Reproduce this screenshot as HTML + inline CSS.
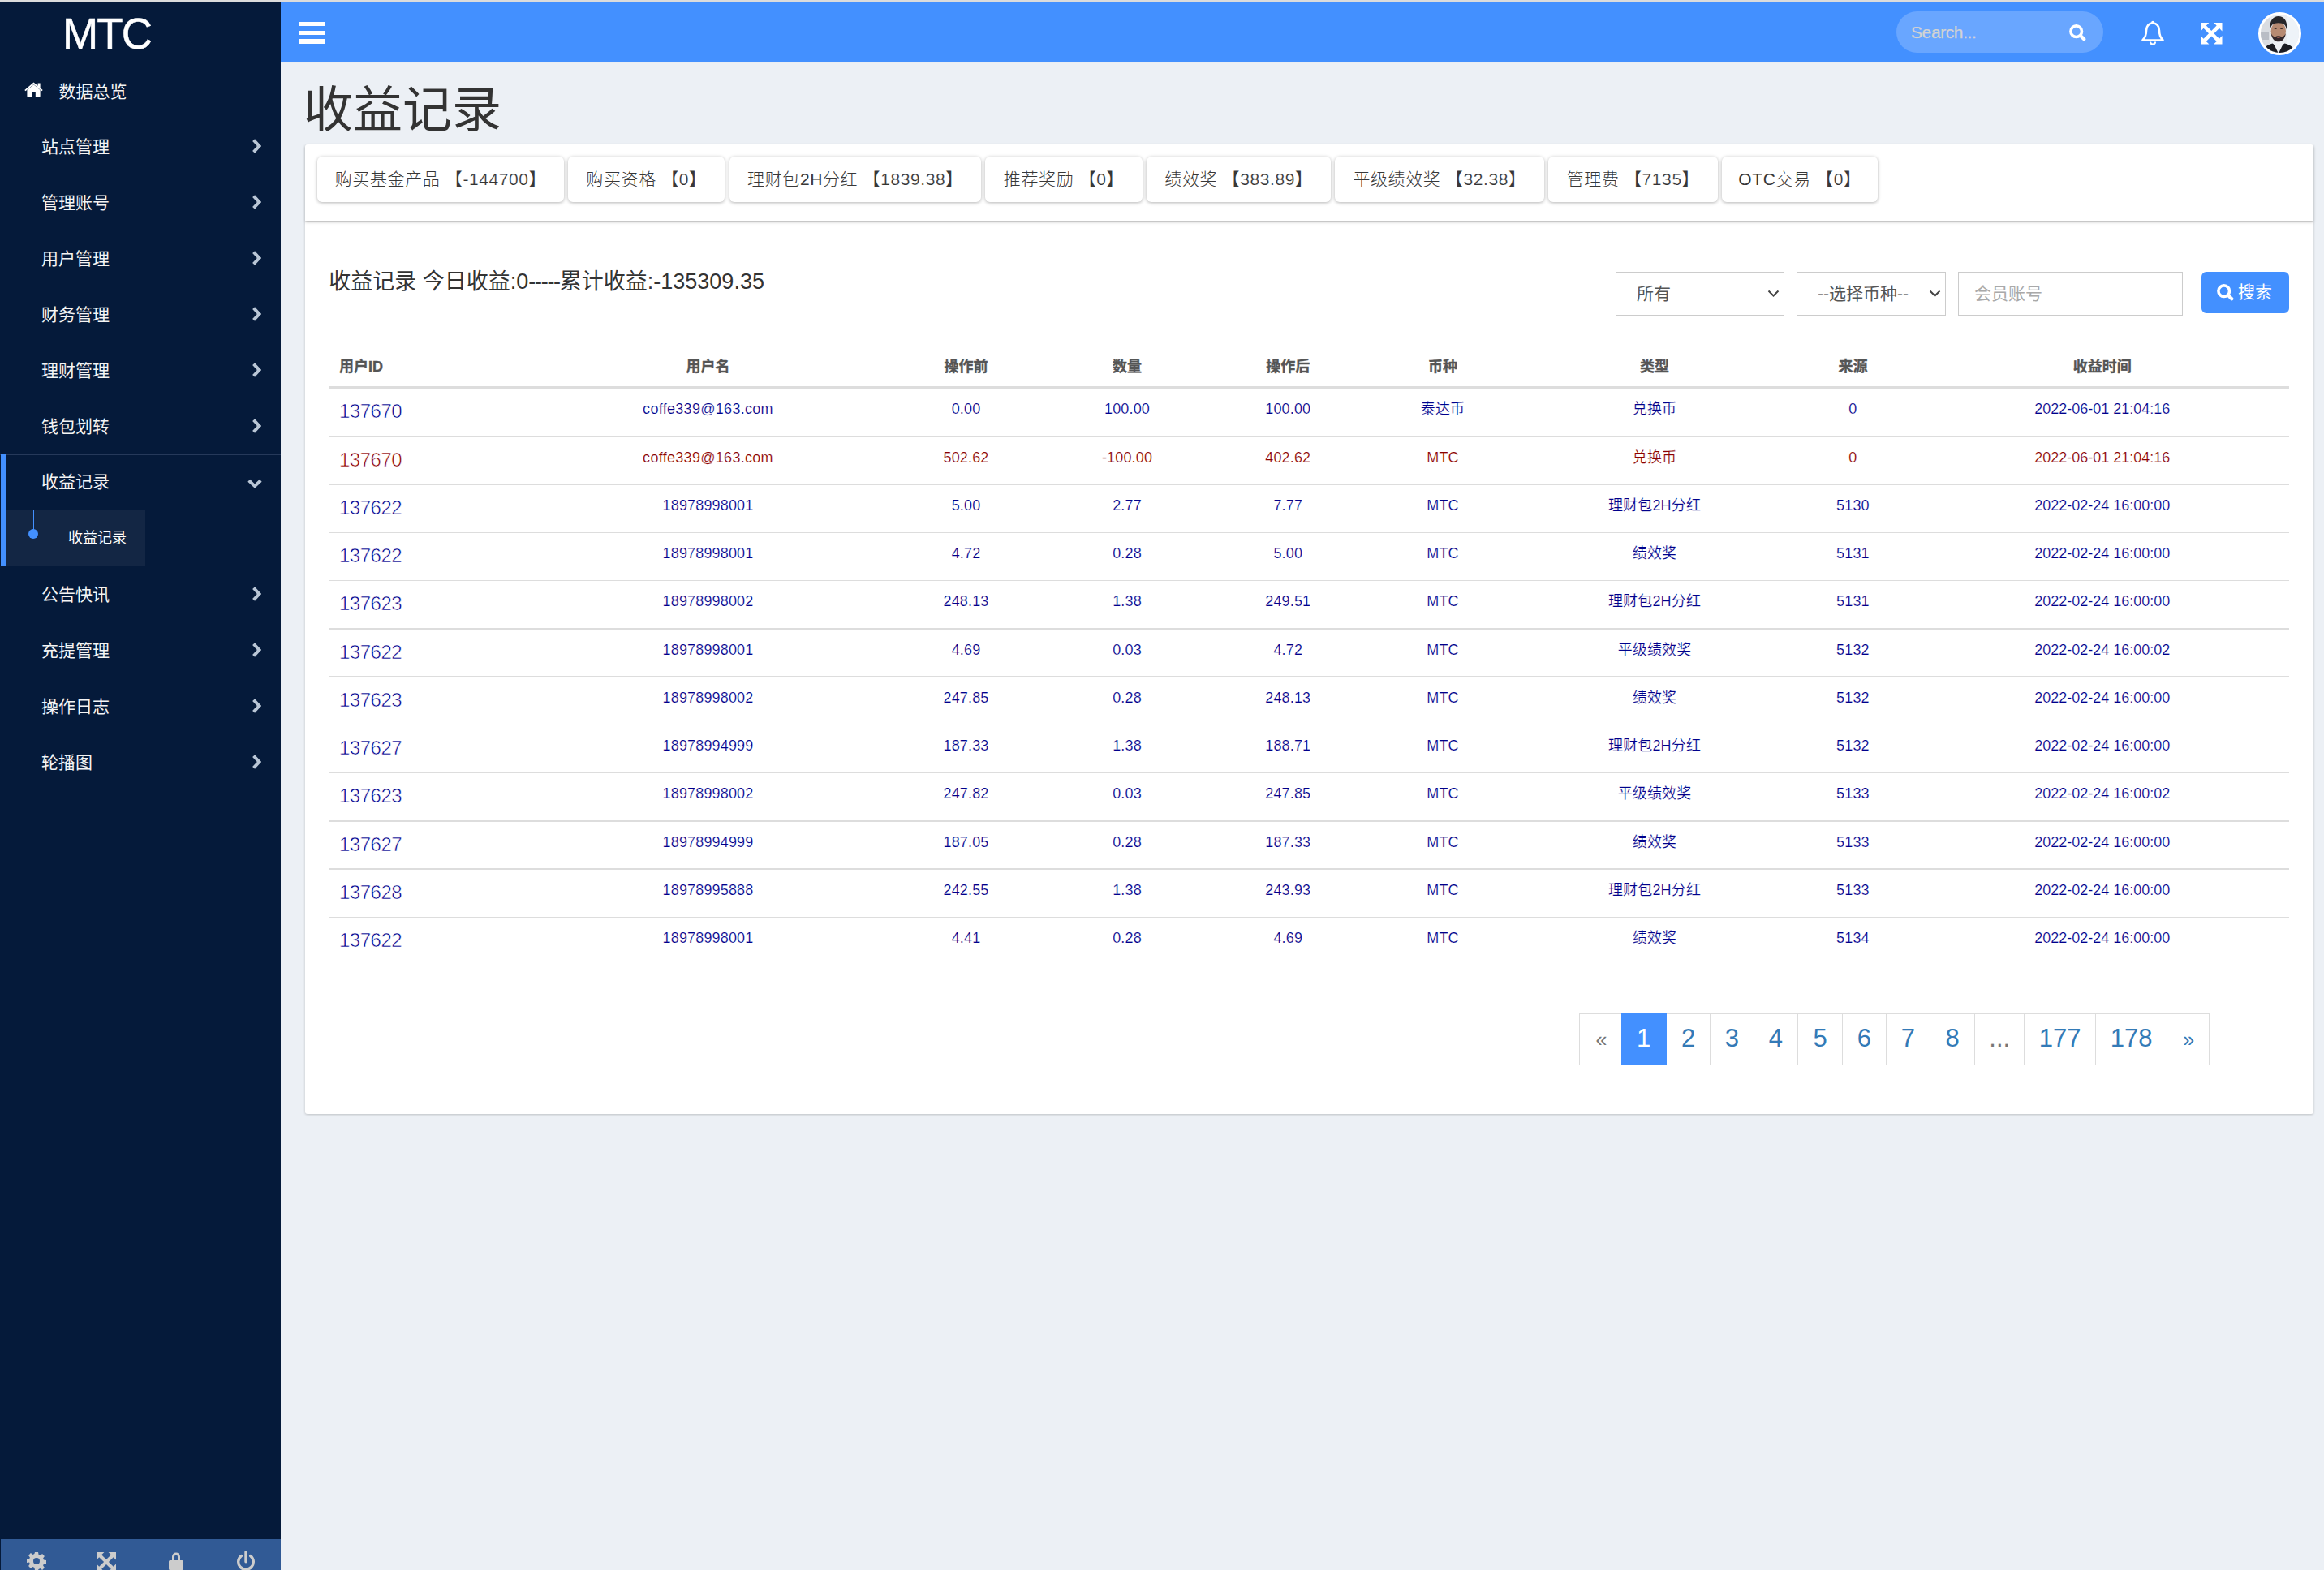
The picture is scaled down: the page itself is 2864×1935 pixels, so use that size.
<!DOCTYPE html>
<html lang="zh-CN">
<head>
<meta charset="utf-8">
<title>收益记录</title>
<style>
*{box-sizing:border-box;margin:0;padding:0}
html,body{width:2864px;height:1935px;overflow:hidden}
body{position:relative;background:#ecf0f5;font-family:"Liberation Sans","Noto Sans CJK SC",sans-serif;font-size:21px;color:#333}
a{text-decoration:none;color:inherit}
ul{list-style:none}
.topstrip{position:absolute;left:0;top:0;width:2864px;height:2px;background:#dcdcdc}
.sidebar{position:absolute;left:0;top:2px;width:346px;height:1933px;background:#051a3a;color:#fff}
.logo{position:absolute;left:1px;top:0;width:345px;height:75px;border-bottom:1px solid #5f5f5f}
.logo span{position:absolute;left:76px;top:10px;-webkit-text-stroke:0.5px #fff;font-size:53px;line-height:60px;letter-spacing:-1.9px;color:#fff}
.nav li{position:absolute;left:0;width:346px;height:69px}
.nav li a{position:absolute;left:51px;top:0;line-height:69px;font-size:21px;color:#f4f4f4;white-space:nowrap}
.nav li .chev{position:absolute;left:310px;top:25px}
.nav li .chevd{position:absolute;left:305px;top:28.5px}
.nav li.home a{left:72.5px}
.nav li.home svg{position:absolute;left:30px;top:23px}
.nav li.active{border-top:1px solid #26395a;background:#051a3a}
.nav li.active a{top:-2px}
.activebar{position:absolute;left:1px;top:558px;width:7px;height:138px;background:#4390ff}
.sub{position:absolute;left:8px;top:627px;width:171px;height:69px;background:#132644}
.sub a{position:absolute;left:76px;top:0;line-height:68px;font-size:18px;color:#fff;white-space:nowrap}
.sub .vline{position:absolute;left:32.5px;top:0;width:1.5px;height:26px;background:#4390ff}
.sub .dot{position:absolute;left:27px;top:23px;width:12px;height:12px;border-radius:50%;background:#4390ff}
.sfoot{position:absolute;left:1px;top:1895px;width:345px;height:60px;background:#315a95}
.sfoot svg{position:absolute;top:16px}
.header{position:absolute;left:346px;top:2px;width:2518px;height:74px;background:#4390ff;box-shadow:0 1px 1px rgba(0,0,0,.06)}
.burger{position:absolute;left:22px;top:24.5px;width:33px;height:28px}
.burger i{position:absolute;left:0;width:33px;height:5.8px;background:#fff;border-radius:1px}
.hsearch{position:absolute;left:1991px;top:12px;width:255px;height:51px;border-radius:26px;background:#69a6ff}
.hsearch span{position:absolute;left:18px;top:0;-webkit-text-stroke:0.25px #d3d3d3;line-height:51px;font-size:21px;color:#d3d3d3;letter-spacing:-0.4px}
.hsearch svg{position:absolute;left:213px;top:15.5px}
.hicon{position:absolute}
.avatar{position:absolute;left:2437px;top:13px;width:53px;height:53px;border-radius:50%;border:3px solid #fff;overflow:hidden;background:#e9e9ea}
h1{position:absolute;left:374px;top:93px;font-size:61px;line-height:86px;font-weight:400;color:#333;white-space:nowrap}
.card1{position:absolute;left:376px;top:178px;width:2475px;height:94px;background:#fff;border-radius:3px 3px 0 0;box-shadow:0 1px 3px rgba(0,0,0,.22),0 2px 4px rgba(0,0,0,.12);z-index:2}
.tab{position:absolute;top:15px;height:56px;line-height:56px;text-align:center;background:#fff;border-radius:6px;box-shadow:0 1px 4px rgba(0,0,0,.3);font-size:21px;letter-spacing:0.6px;font-weight:300;color:#383838;white-space:nowrap}
.tab span{-webkit-text-stroke:0.2px #fff;color:#333}
.card2{position:absolute;left:376px;top:272px;width:2475px;height:1100.5px;background:#fff;border-radius:0 0 3px 3px;box-shadow:0 1px 3px rgba(0,0,0,.2);z-index:1}
.ctitle{position:absolute;left:29.3px;top:55px;font-size:27px;line-height:40px;color:#333;white-space:nowrap}
.hy{letter-spacing:-1.3px}
.sel{position:absolute;top:63px;height:54px;border:1.5px solid #ccc;background:#fff;font-size:21px;color:#555;line-height:51px;white-space:nowrap}
.sel svg{position:absolute;top:21px}
.inp{position:absolute;left:2037px;top:63px;width:277px;height:54px;border:1.5px solid #ccc;background:#fff;font-size:21px;color:#a9a9a9;line-height:51px;padding-left:19px;box-shadow:inset 0 1px 1px rgba(0,0,0,.075)}
.btn{position:absolute;left:2337px;top:63px;width:108px;height:51px;border-radius:6px;background:#4390ff;color:#fff;font-size:21px;line-height:49px}
.btn svg{position:absolute;left:19px;top:15px}
.btn span{position:absolute;left:45px;top:0}
.tbl{position:absolute;left:30px;top:147px;width:2415px;height:780px}
.thead{position:absolute;left:0;top:0;width:2415px;height:60px;border-bottom:3px solid #ddd}
.thead b{position:absolute;top:20px;width:400px;text-align:center;font-size:18px;line-height:26px;font-weight:700;color:#555;white-space:nowrap;-webkit-text-stroke:0.35px #555}
.tr{position:absolute;left:0;width:2415px;height:59px;color:#00008b}
.tr.red{color:#8b0000}
.tr span{position:absolute;top:12px;width:400px;text-align:center;font-size:18px;line-height:26px;white-space:nowrap;letter-spacing:0.15px;-webkit-text-stroke:0.2px #fff}
.tbl .c0{text-align:left}
.tr span.em{letter-spacing:0.3px}
.tr span.dt{letter-spacing:0}
.tr span.c0{font-size:24px;line-height:34px;top:11px;letter-spacing:-0.5px;-webkit-text-stroke:0.55px #fff}
.ln{position:absolute;left:0;width:2415px;height:1.5px;background:#ddd}
.pg{position:absolute;top:976.5px;height:64px;border:1.5px solid #ddd;margin-left:-1.5px;background:#fff;font-size:31px;line-height:59px;text-align:center;color:#337ab7}
.pg.g{font-size:25px;line-height:62.500px;letter-spacing:-1.5px}
.pg.dis{color:#777}
.pg.act{background:#4390ff;border-color:#4390ff;color:#fff;z-index:2}
</style>
</head>
<body>
<div class="topstrip"></div>
<aside class="sidebar">
<div class="logo"><span>MTC</span></div>
<ul class="nav">
<li class="home" style="top:76px"><svg width="23" height="20" viewBox="0 0 23 20"><path d="M11.5 3.2 L3.4 9.9 V17.6 a.8 .8 0 0 0 .8 .8 H9.2 V12.6 H13.8 V18.4 H18.8 a.8 .8 0 0 0 .8 -.8 V9.9 Z" fill="#fff"/><path d="M11.5 0.6 L0.3 9.9 L1.5 11.3 L11.5 3 L21.5 11.3 L22.7 9.9 L19.6 7.3 V1.6 H16.6 V4.8 Z" fill="#fff"/></svg><a>数据总览</a></li>
<li style="top:144px"><a>站点管理</a><svg class="chev" width="12" height="18" viewBox="0 0 12 18"><path d="M2.600 1.700 L9.400 9 L2.600 16.300" fill="none" stroke="#b9c6d6" stroke-width="4" stroke-linecap="butt" stroke-linejoin="miter"/></svg></li>
<li style="top:213px"><a>管理账号</a><svg class="chev" width="12" height="18" viewBox="0 0 12 18"><path d="M2.600 1.700 L9.400 9 L2.600 16.300" fill="none" stroke="#b9c6d6" stroke-width="4" stroke-linecap="butt" stroke-linejoin="miter"/></svg></li>
<li style="top:282px"><a>用户管理</a><svg class="chev" width="12" height="18" viewBox="0 0 12 18"><path d="M2.600 1.700 L9.400 9 L2.600 16.300" fill="none" stroke="#b9c6d6" stroke-width="4" stroke-linecap="butt" stroke-linejoin="miter"/></svg></li>
<li style="top:351px"><a>财务管理</a><svg class="chev" width="12" height="18" viewBox="0 0 12 18"><path d="M2.600 1.700 L9.400 9 L2.600 16.300" fill="none" stroke="#b9c6d6" stroke-width="4" stroke-linecap="butt" stroke-linejoin="miter"/></svg></li>
<li style="top:420px"><a>理财管理</a><svg class="chev" width="12" height="18" viewBox="0 0 12 18"><path d="M2.600 1.700 L9.400 9 L2.600 16.300" fill="none" stroke="#b9c6d6" stroke-width="4" stroke-linecap="butt" stroke-linejoin="miter"/></svg></li>
<li style="top:489px"><a>钱包划转</a><svg class="chev" width="12" height="18" viewBox="0 0 12 18"><path d="M2.600 1.700 L9.400 9 L2.600 16.300" fill="none" stroke="#b9c6d6" stroke-width="4" stroke-linecap="butt" stroke-linejoin="miter"/></svg></li>
<li style="top:696px"><a>公告快讯</a><svg class="chev" width="12" height="18" viewBox="0 0 12 18"><path d="M2.600 1.700 L9.400 9 L2.600 16.300" fill="none" stroke="#b9c6d6" stroke-width="4" stroke-linecap="butt" stroke-linejoin="miter"/></svg></li>
<li style="top:765px"><a>充提管理</a><svg class="chev" width="12" height="18" viewBox="0 0 12 18"><path d="M2.600 1.700 L9.400 9 L2.600 16.300" fill="none" stroke="#b9c6d6" stroke-width="4" stroke-linecap="butt" stroke-linejoin="miter"/></svg></li>
<li style="top:834px"><a>操作日志</a><svg class="chev" width="12" height="18" viewBox="0 0 12 18"><path d="M2.600 1.700 L9.400 9 L2.600 16.300" fill="none" stroke="#b9c6d6" stroke-width="4" stroke-linecap="butt" stroke-linejoin="miter"/></svg></li>
<li style="top:903px"><a>轮播图</a><svg class="chev" width="12" height="18" viewBox="0 0 12 18"><path d="M2.600 1.700 L9.400 9 L2.600 16.300" fill="none" stroke="#b9c6d6" stroke-width="4" stroke-linecap="butt" stroke-linejoin="miter"/></svg></li>
<li class="active" style="top:558px"><a>收益记录</a><svg class="chevd" width="18" height="12" viewBox="0 0 18 12"><path d="M1.700 2.300 L9 9.100 L16.300 2.300" fill="none" stroke="#b9c6d6" stroke-width="4"/></svg></li>
</ul>
<div class="sub"><i class="vline"></i><i class="dot"></i><a>收益记录</a></div>
<div class="activebar"></div>
<div class="sfoot">
<svg width="24" height="24" viewBox="0 0 24 24" style="left:31.5px;top:15px"><path fill="#ccc" fill-rule="evenodd" d="M10 1h4l.6 3.1 1.9.8 2.6-1.8 2.8 2.8-1.8 2.6.8 1.9 3.1.6v4l-3.1.6-.8 1.9 1.8 2.6-2.8 2.8-2.6-1.8-1.9.8L14 23h-4l-.6-3.1-1.9-.8-2.6 1.8-2.8-2.8 1.8-2.6-.8-1.9L0 14v-4l3.100-.6.8-1.9L2.100 4.900 4.900 2.100l2.600 1.800 1.900-.8zM12 8a4 4 0 1 0 0 8 4 4 0 0 0 0-8z"/></svg>
<svg width="24" height="24" viewBox="0 0 26 26" style="left:117.6px"><g fill="#ccc"><path d="M0 0h10.200L6.700 3.500 13 9.800 19.300 3.500 15.800 0H26v10.200l-3.500-3.500L16.200 13l6.300 6.300 3.500-3.500V26H15.800l3.500-3.500L13 16.200 6.700 22.500 10.200 26H0V15.800l3.500 3.500L9.800 13 3.500 6.700 0 10.200z"/></g></svg>
<svg width="18" height="24" viewBox="0 0 18 24" style="left:207px;top:14.500px"><path fill="#ccc" fill-rule="evenodd" d="M4 11V6.500a5 5 0 0 1 10 0V11h2.500a1.500 1.500 0 0 1 1.500 1.500v9a1.500 1.500 0 0 1-1.500 1.500h-15A1.500 1.500 0 0 1 0 21.500v-9A1.500 1.500 0 0 1 1.500 11zm3 0h4V6.500a2 2 0 0 0-4 0z"/></svg>
<svg width="24" height="28" viewBox="0 0 24 28" style="left:290.3px;top:13.500px"><path fill="none" stroke="#ccc" stroke-width="3.400" stroke-linecap="round" d="M12 1.700v12M6.300 6.600a9.300 9.300 0 1 0 11.400 0"/></svg>
</div>
</aside>
<header class="header">
<div class="burger"><i style="top:0.1px"></i><i style="top:11px"></i><i style="top:21.8px"></i></div>
<div class="hsearch"><span>Search...</span><svg width="21" height="21" viewBox="0 0 21 21"><circle cx="8.700" cy="8.700" r="6.800" fill="none" stroke="#fff" stroke-width="3.600"/><path d="M14.200 14.200l4.100 4.100" stroke="#fff" stroke-width="4.200" stroke-linecap="round"/></svg></div>
<svg class="hicon" style="left:2292px;top:23px" width="30" height="32" viewBox="0 0 30 32"><path fill="none" stroke="#fff" stroke-width="2.600" stroke-linejoin="round" d="M15 3.500c-5 0-8 4-8 9 0 6-2 9.500-4.500 12h25C25 22 23 18.500 23 12.500c0-5-3-9-8-9z"/><path fill="none" stroke="#fff" stroke-width="2.200" d="M12 26.500a3 3 0 0 0 6 0"/><circle cx="15" cy="2.500" r="1.800" fill="#fff"/></svg>
<svg width="26.5" height="26.5" viewBox="0 0 26 26" class="hicon" style="left:2366px;top:26px"><g fill="#fff"><path d="M0 0h10.200L6.700 3.500 13 9.800 19.300 3.500 15.800 0H26v10.200l-3.500-3.500L16.200 13l6.300 6.300 3.500-3.500V26H15.800l3.500-3.500L13 16.200 6.700 22.500 10.200 26H0V15.800l3.500 3.500L9.800 13 3.500 6.700 0 10.200z"/></g></svg>
<div class="avatar"><svg width="47" height="47" viewBox="0 0 47 47"><defs><filter id="bl" x="-20%" y="-20%" width="140%" height="140%"><feGaussianBlur stdDeviation="0.75"/></filter></defs><rect width="47" height="47" fill="#e9ecf0"/><g filter="url(#bl)"><rect x="-2" y="-2" width="13" height="51" fill="#d9dce1"/><rect x="-2" y="22" width="12" height="9" fill="#b9bdc5"/><rect x="33" y="-2" width="16" height="51" fill="#eef3f8"/><path d="M2 49c1-8 5-11.500 12.500-13.500l7.500 5 7.500-5C37 37.500 42 41 44.500 49z" fill="#1b1d22"/><path d="M15.500 35l6.400 13 6.300-13-6.300-3z" fill="#eff0f4"/><ellipse cx="21.800" cy="20.500" rx="9.200" ry="12" fill="#b68a72"/><path d="M11.800 18.500C10.400 7 15.500 2 21.800 2s11.800 5 10.100 16.500c-.8-5.500-3.400-8.300-10.100-8.300s-9.200 2.800-10 8.300z" fill="#26272c"/><path d="M12.800 23c.7 7 4.500 10.300 9 10.300s8.300-3.300 9-10.300c-1.600 3.600-3.600 4.300-5.600 4.300-1.200-1.300-5.600-1.300-6.800 0-2 0-4-.7-5.600-4.300z" fill="#33282a"/><ellipse cx="18.200" cy="17" rx="1.700" ry=".9" fill="#3a2b28"/><ellipse cx="25.600" cy="17" rx="1.700" ry=".9" fill="#3a2b28"/><ellipse cx="21.900" cy="28.300" rx="2" ry=".7" fill="#9a5a55"/></g></svg></div>
</header>
<h1>收益记录</h1>
<section class="card1">
<a class="tab" style="left:15px;width:304px">购买基金产品 【<span>-144700</span>】</a>
<a class="tab" style="left:324px;width:193px">购买资格 【<span>0</span>】</a>
<a class="tab" style="left:523px;width:310px">理财包2H分红 【<span>1839.38</span>】</a>
<a class="tab" style="left:838px;width:194px">推荐奖励 【<span>0</span>】</a>
<a class="tab" style="left:1037px;width:227px">绩效奖 【<span>383.89</span>】</a>
<a class="tab" style="left:1269px;width:258px">平级绩效奖 【<span>32.38</span>】</a>
<a class="tab" style="left:1532px;width:209px">管理费 【<span>7135</span>】</a>
<a class="tab" style="left:1746px;width:192px">OTC交易 【<span>0</span>】</a>
</section>
<section class="card2">
<div class="ctitle">收益记录 今日收益:0<span class="hy">-----</span>累计收益:-135309.35</div>
<div class="sel" style="left:1615px;width:208px;padding-left:25px">所有<svg width="15" height="10" viewBox="0 0 15 10" style="left:186px"><path d="M1.500 1.500l6 6 6-6" fill="none" stroke="#444" stroke-width="2"/></svg></div>
<div class="sel" style="left:1838px;width:184px;padding-left:25px">--选择币种--<svg width="15" height="10" viewBox="0 0 15 10" style="left:162px"><path d="M1.500 1.500l6 6 6-6" fill="none" stroke="#444" stroke-width="2"/></svg></div>
<div class="inp">会员账号</div>
<div class="btn"><svg width="21" height="21" viewBox="0 0 21 21"><circle cx="8.700" cy="8.700" r="6.800" fill="none" stroke="#fff" stroke-width="3.600"/><path d="M14.200 14.200l4.100 4.100" stroke="#fff" stroke-width="4.200" stroke-linecap="round"/></svg><span>搜索</span></div>
<div class="tbl">
<div class="thead"><b class="c0" style="left:12px">用户ID</b><b style="left:266.5px">用户名</b><b style="left:584.5px">操作前</b><b style="left:783px">数量</b><b style="left:981.25px">操作后</b><b style="left:1172px">币种</b><b style="left:1433px">类型</b><b style="left:1677.4px">来源</b><b style="left:1984.75px">收益时间</b></div>
<div class="tr" style="top:60px"><span class="c0" style="left:12px">137670</span><span class="em" style="left:266.5px">coffe339@163.com</span><span style="left:584.5px">0.00</span><span style="left:783px">100.00</span><span style="left:981.25px">100.00</span><span style="left:1172px">泰达币</span><span style="left:1433px">兑换币</span><span style="left:1677.4px">0</span><span class="dt" style="left:1984.75px">2022-06-01 21:04:16</span></div>
<div class="tr red" style="top:120px"><span class="c0" style="left:12px">137670</span><span class="em" style="left:266.5px">coffe339@163.com</span><span style="left:584.5px">502.62</span><span style="left:783px">-100.00</span><span style="left:981.25px">402.62</span><span style="left:1172px">MTC</span><span style="left:1433px">兑换币</span><span style="left:1677.4px">0</span><span class="dt" style="left:1984.75px">2022-06-01 21:04:16</span></div>
<div class="tr" style="top:179px"><span class="c0" style="left:12px">137622</span><span style="left:266.5px">18978998001</span><span style="left:584.5px">5.00</span><span style="left:783px">2.77</span><span style="left:981.25px">7.77</span><span style="left:1172px">MTC</span><span style="left:1433px">理财包2H分红</span><span style="left:1677.4px">5130</span><span class="dt" style="left:1984.75px">2022-02-24 16:00:00</span></div>
<div class="tr" style="top:238px"><span class="c0" style="left:12px">137622</span><span style="left:266.5px">18978998001</span><span style="left:584.5px">4.72</span><span style="left:783px">0.28</span><span style="left:981.25px">5.00</span><span style="left:1172px">MTC</span><span style="left:1433px">绩效奖</span><span style="left:1677.4px">5131</span><span class="dt" style="left:1984.75px">2022-02-24 16:00:00</span></div>
<div class="tr" style="top:297px"><span class="c0" style="left:12px">137623</span><span style="left:266.5px">18978998002</span><span style="left:584.5px">248.13</span><span style="left:783px">1.38</span><span style="left:981.25px">249.51</span><span style="left:1172px">MTC</span><span style="left:1433px">理财包2H分红</span><span style="left:1677.4px">5131</span><span class="dt" style="left:1984.75px">2022-02-24 16:00:00</span></div>
<div class="tr" style="top:357px"><span class="c0" style="left:12px">137622</span><span style="left:266.5px">18978998001</span><span style="left:584.5px">4.69</span><span style="left:783px">0.03</span><span style="left:981.25px">4.72</span><span style="left:1172px">MTC</span><span style="left:1433px">平级绩效奖</span><span style="left:1677.4px">5132</span><span class="dt" style="left:1984.75px">2022-02-24 16:00:02</span></div>
<div class="tr" style="top:416px"><span class="c0" style="left:12px">137623</span><span style="left:266.5px">18978998002</span><span style="left:584.5px">247.85</span><span style="left:783px">0.28</span><span style="left:981.25px">248.13</span><span style="left:1172px">MTC</span><span style="left:1433px">绩效奖</span><span style="left:1677.4px">5132</span><span class="dt" style="left:1984.75px">2022-02-24 16:00:00</span></div>
<div class="tr" style="top:475px"><span class="c0" style="left:12px">137627</span><span style="left:266.5px">18978994999</span><span style="left:584.5px">187.33</span><span style="left:783px">1.38</span><span style="left:981.25px">188.71</span><span style="left:1172px">MTC</span><span style="left:1433px">理财包2H分红</span><span style="left:1677.4px">5132</span><span class="dt" style="left:1984.75px">2022-02-24 16:00:00</span></div>
<div class="tr" style="top:534px"><span class="c0" style="left:12px">137623</span><span style="left:266.5px">18978998002</span><span style="left:584.5px">247.82</span><span style="left:783px">0.03</span><span style="left:981.25px">247.85</span><span style="left:1172px">MTC</span><span style="left:1433px">平级绩效奖</span><span style="left:1677.4px">5133</span><span class="dt" style="left:1984.75px">2022-02-24 16:00:02</span></div>
<div class="tr" style="top:594px"><span class="c0" style="left:12px">137627</span><span style="left:266.5px">18978994999</span><span style="left:584.5px">187.05</span><span style="left:783px">0.28</span><span style="left:981.25px">187.33</span><span style="left:1172px">MTC</span><span style="left:1433px">绩效奖</span><span style="left:1677.4px">5133</span><span class="dt" style="left:1984.75px">2022-02-24 16:00:00</span></div>
<div class="tr" style="top:653px"><span class="c0" style="left:12px">137628</span><span style="left:266.5px">18978995888</span><span style="left:584.5px">242.55</span><span style="left:783px">1.38</span><span style="left:981.25px">243.93</span><span style="left:1172px">MTC</span><span style="left:1433px">理财包2H分红</span><span style="left:1677.4px">5133</span><span class="dt" style="left:1984.75px">2022-02-24 16:00:00</span></div>
<div class="tr" style="top:712px"><span class="c0" style="left:12px">137622</span><span style="left:266.5px">18978998001</span><span style="left:584.5px">4.41</span><span style="left:783px">0.28</span><span style="left:981.25px">4.69</span><span style="left:1172px">MTC</span><span style="left:1433px">绩效奖</span><span style="left:1677.4px">5134</span><span class="dt" style="left:1984.75px">2022-02-24 16:00:00</span></div>
<i class="ln" style="top:118px;height:2px"></i>
<i class="ln" style="top:177px;height:2px"></i>
<i class="ln" style="top:237px;height:1px"></i>
<i class="ln" style="top:296px;height:1px"></i>
<i class="ln" style="top:355px;height:2px"></i>
<i class="ln" style="top:414px;height:2px"></i>
<i class="ln" style="top:474px;height:1px"></i>
<i class="ln" style="top:533px;height:1px"></i>
<i class="ln" style="top:592px;height:2px"></i>
<i class="ln" style="top:651px;height:2px"></i>
<i class="ln" style="top:711px;height:1px"></i>
</div>
<a class="pg dis g" style="left:1571.75px;width:52.8px">«</a>
<a class="pg act" style="left:1623.05px;width:56px">1</a>
<a class="pg " style="left:1678.55px;width:55.3px">2</a>
<a class="pg " style="left:1732.35px;width:55.2px">3</a>
<a class="pg " style="left:1786.05px;width:55.8px">4</a>
<a class="pg " style="left:1840.35px;width:56.5px">5</a>
<a class="pg " style="left:1895.35px;width:55.3px">6</a>
<a class="pg " style="left:1949.15px;width:55.7px">7</a>
<a class="pg " style="left:2003.35px;width:56.6px">8</a>
<a class="pg dis" style="left:2058.45px;width:62.6px">...</a>
<a class="pg " style="left:2119.55px;width:89.3px">177</a>
<a class="pg " style="left:2207.35px;width:89.7px">178</a>
<a class="pg g" style="left:2295.55px;width:52.7px">»</a>
</section>
</body>
</html>
